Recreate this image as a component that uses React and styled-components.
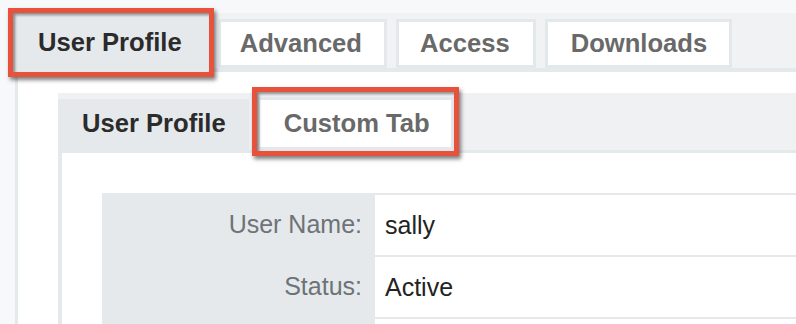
import React from 'react';
import styled, { createGlobalStyle } from 'styled-components';

const GlobalStyle = createGlobalStyle`
    html, body {
        margin: 0;
        padding: 0;
        background: #f7f8fa;
        overflow: hidden;
    }
    * {
        box-sizing: border-box;
    }
`

const Page = styled.div`
    display: flex;
    flex-direction: column;
    height: 324px;
    overflow: hidden;
    padding: 13px 0 0 14px;
    font-family: "Liberation Sans", Arial, Helvetica, sans-serif;
`

const OuterTabs = styled.div`
    display: flex;
    flex-shrink: 0;
    align-items: flex-end;
    gap: 9px;
    height: 59px;
    background: #f1f2f4;
    border-bottom: 4px solid #e4e9eb;
`

const InnerTabs = styled.div`
    display: flex;
    flex-shrink: 0;
    align-items: flex-end;
    gap: 8px;
    height: 60px;
    background: #f0f1f3;
    border-bottom: 3px solid #e4e9eb;
`

const Tab = styled.div`
    display: flex;
    align-items: center;
    height: ${p => p.$h}px;
    padding: 0 ${p => p.$pr}px ${p => p.$pb || 0}px ${p => p.$pl}px;
    font-size: 25.6px;
    font-weight: 700;
    white-space: nowrap;
    color: ${p => (p.$active ? '#2b2b2b' : '#696969')};
    background: ${p => (p.$active ? '#e5e9ec' : '#ffffff')};
    border: ${p => (p.$active ? 'none' : '3px solid #e3e8ea')};
    margin-bottom: ${p => (p.$active ? `-${p.$sink}px` : '0')};
`

const Highlight = styled.div`
    position: relative;
    display: flex;
    margin-bottom: ${p => p.$sink || 0}px;

    &::after {
        content: '';
        position: absolute;
        top: ${p => p.$t}px;
        left: ${p => p.$l}px;
        right: ${p => p.$r}px;
        bottom: ${p => p.$b}px;
        border: 5px solid #e6523b;
        box-shadow: 2px 3px 4px rgba(0, 0, 0, 0.5), inset 2px 2px 3px rgba(0, 0, 0, 0.45);
        pointer-events: none;
        z-index: 2;
    }
`

const OuterPanel = styled.div`
    flex: 1;
    background: #ffffff;
    border-left: 3px solid #e4e9eb;
    margin-left: 1px;
    padding: 21px 0 0 40px;
    display: flex;
    flex-direction: column;
`

const InnerPanel = styled.div`
    flex: 1;
    background: #ffffff;
    border-left: 4px solid #e5e9ec;
    padding: 40px 0 0 40px;
`

const Fields = styled.div`
    display: grid;
    grid-template-columns: 273px 1fr;
`

const Label = styled.div`
    display: flex;
    align-items: center;
    justify-content: flex-end;
    height: 62px;
    padding-right: 13px;
    background: #e5e9ec;
    color: #6d7376;
    font-size: 25px;
`

const Value = styled.div`
    display: flex;
    align-items: center;
    height: 62px;
    padding-left: 10px;
    border-top: 2px solid #e5e9ec;
    color: #232323;
    font-size: 25px;
`

const fields = [
    { label: 'User Name:', value: 'sally' },
    { label: 'Status:', value: 'Active' },
    { label: '', value: '' },
];

const App = () => {
    return (
        <Page>
            <GlobalStyle />
            <OuterTabs>
                <Highlight $t={-7} $l={-6} $r={-5} $b={-5} $sink={-4}>
                    <Tab $active $h={57} $pl={24} $pr={27} $pb={2} $sink={0}>User Profile</Tab>
                </Highlight>
                <Tab $h={49} $pl={19} $pr={22}>Advanced</Tab>
                <Tab $h={49} $pl={21} $pr={23}>Access</Tab>
                <Tab $h={49} $pl={23} $pr={22}>Downloads</Tab>
            </OuterTabs>
            <OuterPanel>
                <InnerTabs>
                    <Tab $active $h={54} $pl={24} $pr={23} $pb={6} $sink={3}>User Profile</Tab>
                    <Highlight $t={-10} $l={-5} $r={-5} $b={-6}>
                        <Tab $h={53} $pl={24} $pr={21}>Custom Tab</Tab>
                    </Highlight>
                </InnerTabs>
                <InnerPanel>
                    <Fields>
                        {fields.map((f, i) => (
                            <React.Fragment key={i}>
                                <Label>{f.label}</Label>
                                <Value>{f.value}</Value>
                            </React.Fragment>
                        ))}
                    </Fields>
                </InnerPanel>
            </OuterPanel>
        </Page>
    );
};

export default App;
